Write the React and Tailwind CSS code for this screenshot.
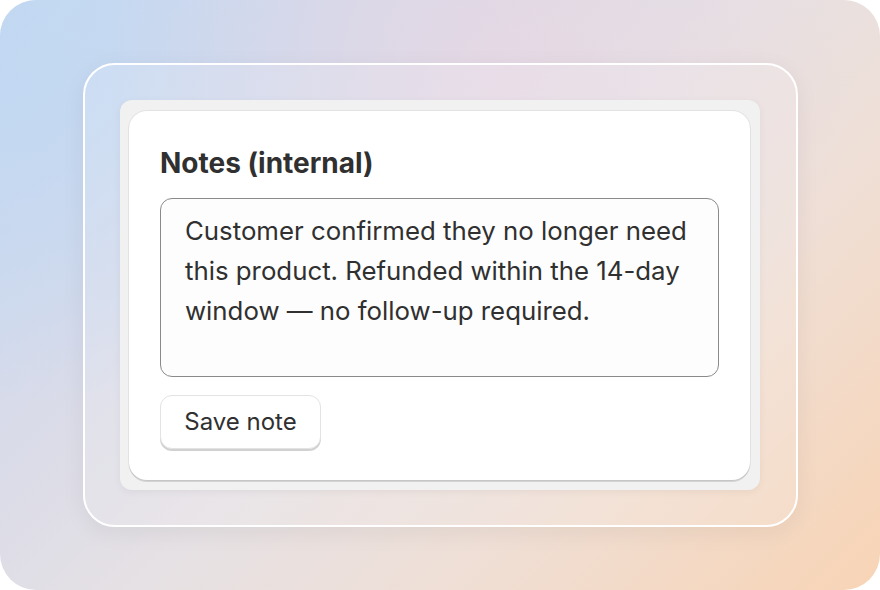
export default function App() {
  return (
    <div className="w-[880px] h-[590px] bg-white font-[Inter,'Noto_Sans',sans-serif]">
      <div className="relative w-full h-full rounded-[36px] overflow-hidden flex items-center justify-center bg-[linear-gradient(135deg,#c2d8f2_0%,#d9dbe9_30%,#e6e1e4_50%,#efdfd6_70%,#f8d4b5_100%)]">
        <div className="absolute inset-0 bg-[radial-gradient(ellipse_at_0%_15%,rgba(194,216,242,0.85),transparent_45%)]" />
        <div className="absolute inset-0 bg-[radial-gradient(ellipse_at_55%_12%,rgba(232,214,226,0.7),transparent_55%)]" />
        <div className="relative w-[715px] h-[464px] -mt-px rounded-[32px] border-2 border-white bg-white/15 shadow-[0_6px_24px_rgba(0,0,0,0.06)] flex items-center justify-center">
          <div className="w-[640px] h-[390px] rounded-[12px] bg-[#f1f1f1] pt-[11px] pl-[9px] pr-[10px] pb-[10px] shadow-[0_2px_8px_rgba(0,0,0,0.05)]">
            <div className="h-full rounded-[18px] bg-white shadow-[0_2px_0_rgba(0,0,0,0.12),0_0_0_1px_rgba(0,0,0,0.06)] pt-[32px] px-[31px]">
              <div className="text-[28px] font-bold text-[#303030] leading-[40px]">Notes (internal)</div>
              <div className="mt-[15px] h-[179px] rounded-[12px] border border-[#8a8a8a] bg-[#fdfdfd] pl-[24px] pr-[24px] pt-[12px] text-[25.8px] leading-[40px] text-[#303030]">
                Customer confirmed they no longer need this product. Refunded within the 14-day window — no follow-up required.
              </div>
              <div className="mt-[18px] w-[161px] h-[54px] rounded-[12px] border border-[#e3e3e3] bg-white shadow-[0_2px_0_rgba(0,0,0,0.18)] flex items-center justify-center text-[24px] text-[#303030] font-normal">
                Save note
              </div>
            </div>
          </div>
        </div>
      </div>
    </div>
  );
}
